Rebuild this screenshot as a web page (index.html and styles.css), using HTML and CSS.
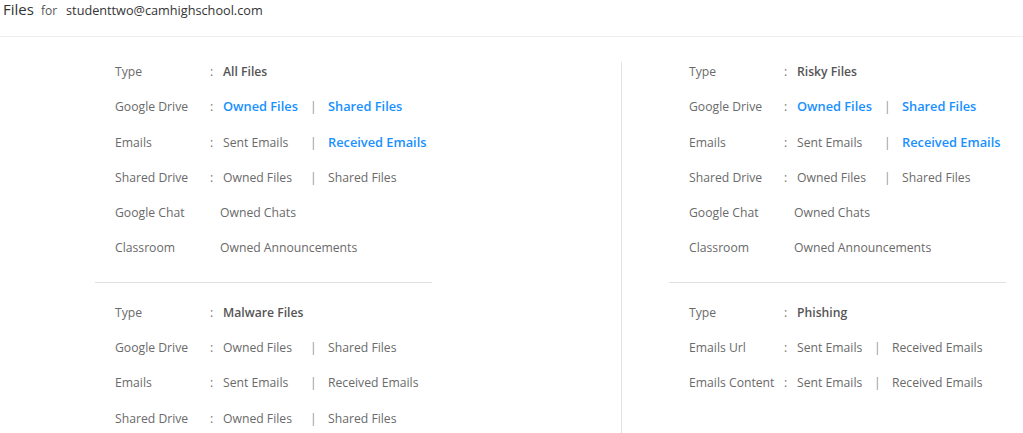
FILE: index.html
```html
<!DOCTYPE html>
<html>
<head>
<meta charset="utf-8">
<link rel="stylesheet" href="styles.css">
</head>
<body>
<header class="top">
  <span class="title">Files</span>
  <span class="for">for</span>
  <span class="email">studenttwo@camhighschool.com</span>
</header>
<main class="grid">
  <div class="col col-left">
    <section class="block">
      <div class="row"><span class="lbl">Type</span><span class="colon">:</span><span class="val strong">All Files</span></div>
      <div class="row"><span class="lbl">Google Drive</span><span class="colon">:</span><span class="val link">Owned Files</span><span class="sep">|</span><span class="val link">Shared Files</span></div>
      <div class="row"><span class="lbl">Emails</span><span class="colon">:</span><span class="val">Sent Emails</span><span class="sep">|</span><span class="val link">Received Emails</span></div>
      <div class="row"><span class="lbl">Shared Drive</span><span class="colon">:</span><span class="val">Owned Files</span><span class="sep">|</span><span class="val">Shared Files</span></div>
      <div class="row"><span class="lbl">Google Chat</span><span class="colon"></span><span class="val nocolon">Owned Chats</span></div>
      <div class="row"><span class="lbl">Classroom</span><span class="colon"></span><span class="val nocolon">Owned Announcements</span></div>
    </section>
    <hr class="divider">
    <section class="block">
      <div class="row"><span class="lbl">Type</span><span class="colon">:</span><span class="val strong">Malware Files</span></div>
      <div class="row"><span class="lbl">Google Drive</span><span class="colon">:</span><span class="val">Owned Files</span><span class="sep">|</span><span class="val">Shared Files</span></div>
      <div class="row"><span class="lbl">Emails</span><span class="colon">:</span><span class="val">Sent Emails</span><span class="sep">|</span><span class="val">Received Emails</span></div>
      <div class="row"><span class="lbl">Shared Drive</span><span class="colon">:</span><span class="val">Owned Files</span><span class="sep">|</span><span class="val">Shared Files</span></div>
    </section>
  </div>
  <div class="col col-right">
    <section class="block">
      <div class="row"><span class="lbl">Type</span><span class="colon">:</span><span class="val strong">Risky Files</span></div>
      <div class="row"><span class="lbl">Google Drive</span><span class="colon">:</span><span class="val link">Owned Files</span><span class="sep">|</span><span class="val link">Shared Files</span></div>
      <div class="row"><span class="lbl">Emails</span><span class="colon">:</span><span class="val">Sent Emails</span><span class="sep">|</span><span class="val link">Received Emails</span></div>
      <div class="row"><span class="lbl">Shared Drive</span><span class="colon">:</span><span class="val">Owned Files</span><span class="sep">|</span><span class="val">Shared Files</span></div>
      <div class="row"><span class="lbl">Google Chat</span><span class="colon"></span><span class="val nocolon">Owned Chats</span></div>
      <div class="row"><span class="lbl">Classroom</span><span class="colon"></span><span class="val nocolon">Owned Announcements</span></div>
    </section>
    <hr class="divider">
    <section class="block compact">
      <div class="row"><span class="lbl">Type</span><span class="colon">:</span><span class="val strong">Phishing</span></div>
      <div class="row"><span class="lbl">Emails Url</span><span class="colon">:</span><span class="val">Sent Emails</span><span class="sep">|</span><span class="val">Received Emails</span></div>
      <div class="row"><span class="lbl">Emails Content</span><span class="colon">:</span><span class="val">Sent Emails</span><span class="sep">|</span><span class="val">Received Emails</span></div>
    </section>
  </div>
</main>
</body>
</html>
```
FILE: styles.css
```css
* { box-sizing: border-box; }
html, body { margin: 0; padding: 0; background: #fff; overflow: hidden; height: 100%; }
body {
  font-family: "Open Sans", "Noto Sans", "Liberation Sans", sans-serif;
  font-size: 12.2px;
  color: #666;
}
.top {
  height: 37px;
  border-bottom: 1px solid #eeeeee;
  padding: 0 0 0 3px;
  display: flex;
  align-items: baseline;
  line-height: 19px;
}
.title { font-size: 15px; color: #333; margin-right: 7px; }
.for { font-size: 12px; color: #555; margin-right: 9px; }
.email { font-size: 12.7px; color: #333; }

.grid {
  display: grid;
  grid-template-columns: 337px 337px;
  column-gap: 0;
  padding-left: 95px;
  padding-top: 25px;
  height: calc(100% - 37px);
}
.col-right {
  margin-left: 189px;
  border-left: 1px solid #e2e2e2;
  padding-left: 47px;
  width: 385px;
}
.block { padding-left: 20px; }
.row {
  display: flex;
  align-items: baseline;
  height: 35.3px;
  line-height: 20px;
  white-space: nowrap;
}
.lbl { width: 95px; color: #6a6a6a; }
.colon { width: 13px; color: #777; }
.val { color: #6a6a6a; }
.row .colon + .val { width: 87px; }
.compact .row .colon + .val { width: 77px; }
.nocolon { margin-left: -3px; }
.strong { font-weight: 600; color: #555; }
.link { color: #1890ff; font-weight: 600; font-size: 12.8px; line-height: 18px; }
.sep { width: 18px; color: #999; }
.divider {
  border: 0;
  border-top: 1px solid #e0e0e0;
  margin: 8px 0 20px 0;
  height: 0;
}
```
